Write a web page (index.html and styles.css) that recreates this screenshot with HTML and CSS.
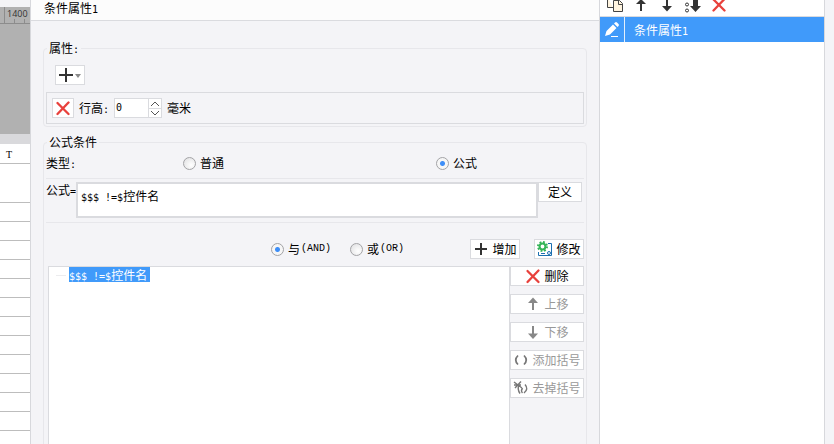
FILE: index.html
```html
<!DOCTYPE html>
<html lang="zh-CN">
<head>
<meta charset="utf-8">
<title>条件属性</title>
<link rel="stylesheet" href="styles.css">
</head>
<body>
<div class="app">
  <div class="sheet">
    <div class="ruler"><span>1400</span><svg width="30" height="17" viewBox="0 0 30 17"><path d="M4.500 0v17M14.500 12v4M24.500 12v4M0 16.500h30" stroke="#8c8c8c" fill="none"/></svg></div>
    <div class="canvas"></div>
    <div class="col-head">T</div>
    <div class="cell tall"></div>
    <div class="cell"></div><div class="cell"></div><div class="cell"></div><div class="cell"></div>
    <div class="cell"></div><div class="cell"></div><div class="cell"></div><div class="cell"></div>
    <div class="cell"></div><div class="cell"></div><div class="cell"></div><div class="cell"></div>
    <div class="cell"></div>
  </div>

  <main class="editor">
    <h1 class="title">条件属性<span class="en">1</span></h1>

    <fieldset class="group">
      <legend>属性<span class="en">:</span></legend>
      <button class="btn add-prop" aria-label="添加属性">
        <svg width="24" height="16" viewBox="0 0 24 16"><path d="M8 1v14M1 8h14" stroke="#333" stroke-width="2" fill="none"/><path d="M17 7h6l-3 4z" fill="#8a8a8a"/></svg>
      </button>
      <div class="prop-row">
        <button class="btn remove" aria-label="删除行高">
          <svg width="16" height="16" viewBox="0 0 16 16"><path d="M2.500 3l11 11M13.500 2.500L2.500 14" stroke="#e8413c" stroke-width="2.300" stroke-linecap="round"/></svg>
        </button>
        <label for="height">行高<span class="en">:</span></label>
        <div class="spinner">
          <input id="height" type="text" value="0">
          <div class="steps">
            <button aria-label="增大"><svg width="10" height="6" viewBox="0 0 10 6"><path d="M1 5l4-4 4 4" stroke="#555" fill="none"/></svg></button>
            <button aria-label="减小"><svg width="10" height="6" viewBox="0 0 10 6"><path d="M1 1l4 4 4-4" stroke="#555" fill="none"/></svg></button>
          </div>
        </div>
        <span>毫米</span>
      </div>
    </fieldset>

    <fieldset class="group conditions">
      <legend>公式条件</legend>
      <div class="type-row">
        <span>类型<span class="en">:</span></span>
        <label><input type="radio" name="type">普通</label>
        <label><input type="radio" name="type" checked>公式</label>
      </div>
      <div class="formula-row">
        <label for="formula">公式<span class="en">=</span></label>
        <div id="formula" class="formula" role="textbox" contenteditable="true"><span class="en">$$$ !=$</span>控件名</div>
        <button class="btn define">定义</button>
      </div>
      <div class="join-row">
        <label><input type="radio" name="join" checked>与<span class="serif">(AND)</span></label>
        <label><input type="radio" name="join">或<span class="serif">(OR)</span></label>
        <button class="btn small push">
          <svg width="16" height="16" viewBox="0 0 16 16"><path d="M8 2v12M2 8h12" stroke="#333" stroke-width="2"/></svg>增加</button>
        <button class="btn small">
          <svg width="16" height="16" viewBox="0 0 16 16"><path d="M11 2.500h3.500v12h-13V11" stroke="#1b6fb0" fill="none"/><path d="M4 12.500h4" stroke="#1b6fb0" fill="none"/><circle cx="12" cy="12" r="1.500" stroke="#1b6fb0" fill="none"/><circle cx="5.500" cy="5.500" r="4.500" fill="none" stroke="#35b558" stroke-width="2" stroke-dasharray="1.800 1.734"/><circle cx="5.500" cy="5.500" r="2.900" fill="none" stroke="#35b558" stroke-width="2"/></svg>修改</button>
      </div>
      <div class="tree-row">
        <div class="tree"><div class="node"><span class="en">$$$ !=$</span>控件名</div></div>
        <div class="actions">
          <button class="btn">
            <svg width="16" height="16" viewBox="0 0 16 16"><path d="M2.500 3l11 11M13.500 2.500L2.500 14" stroke="#e8413c" stroke-width="2.300" stroke-linecap="round"/></svg>删除</button>
          <button class="btn" disabled>
            <svg width="16" height="16" viewBox="0 0 16 16"><path d="M8 14V4" stroke="#888" stroke-width="2"/><path d="M3 7l5-5.500L13 7z" fill="#888"/></svg>上移</button>
          <button class="btn" disabled>
            <svg width="16" height="16" viewBox="0 0 16 16"><path d="M8 2v9" stroke="#888" stroke-width="2"/><path d="M3 9.500h10L8 15z" fill="#888"/></svg>下移</button>
          <button class="btn" disabled>
            <svg width="16" height="16" viewBox="0 0 16 16"><path d="M5 3.500Q.5 8 5 12.500M11 3.500Q15.500 8 11 12.500" stroke="#777" stroke-width="1.700" fill="none"/></svg>添加括号</button>
          <button class="btn" disabled>
            <svg width="16" height="16" viewBox="0 0 16 16"><path d="M1 2l8 6M8 1.500L2 8M1 5h7M6 5Q4 9 7 13.500M12 4.500Q16 9 11 13M9.500 8q-2 3 0 5" stroke="#777" stroke-width="1.400" fill="none"/></svg>去掉括号</button>
        </div>
      </div>
    </fieldset>
  </main>

  <aside class="list">
    <div class="tools">
      <button aria-label="复制"><svg width="18" height="18" viewBox="0 0 18 18"><path d="M1.500 2v10.500H7M1.500 2H9" stroke="#444" fill="#fff4df"/><path d="M7.500 5.500h6l3 3v8h-9z" fill="#fff4df" stroke="#444"/><path d="M12.500 6v3.500H16" fill="none" stroke="#444"/></svg></button>
      <button aria-label="上移"><svg width="18" height="18" viewBox="0 0 18 18"><path d="M9 16V4" stroke="#333" stroke-width="2"/><path d="M4 9l5-5 5 5z" fill="#333"/></svg></button>
      <button aria-label="下移"><svg width="18" height="18" viewBox="0 0 18 18"><path d="M9 3v10" stroke="#333" stroke-width="2"/><path d="M4 11h10l-5 5.500z" fill="#333"/></svg></button>
      <button aria-label="排序"><svg width="18" height="18" viewBox="0 0 18 18"><circle cx="3" cy="9.500" r="1.500" fill="none" stroke="#333"/><circle cx="3" cy="15.500" r="1.500" fill="none" stroke="#333"/><path d="M9 3h5v8h3l-5.500 6L6 11h3z" fill="#333"/></svg></button>
      <button aria-label="删除"><svg width="18" height="18" viewBox="0 0 18 18"><path d="M3.500 4.500l11 11M14.500 4L3.500 15.500" stroke="#e8413c" stroke-width="2.300" stroke-linecap="round"/></svg></button>
    </div>
    <div class="item">
      <span class="pen"><svg width="16" height="16" viewBox="0 0 16 16"><path d="M1 14l1.500-5L9 2.500 12.500 6 6 12.500z M10 1.500l1-1q1-.8 2 0l1.500 1.500q.8 1 0 2l-1 1z" fill="#fff"/><path d="M7 14.500h7" stroke="#fff"/></svg></span>
      <span class="name">条件属性<span class="en">1</span></span>
    </div>
  </aside>
</div>
</body>
</html>
```
FILE: styles.css
```css
* { box-sizing: border-box; }

body {
  margin: 0;
  background: #f4f4f7;
  color: #000;
  font: 12px/16px "Noto Sans CJK SC", sans-serif;
}

button, input {
  font: inherit;
  color: inherit;
  margin: 0;
}

svg { display: block; flex: none; }

.app {
  display: grid;
  grid-template-columns: 31px 1fr 235px;
  height: 100vh;
  overflow: hidden;
}

.en { font: 10px/14px "DejaVu Sans Mono", monospace; white-space: pre; }
.serif { font: 10px/20px "Liberation Mono", monospace; }

/* Spreadsheet behind the dialog */
.sheet {
  border-right: 1px solid #d7d8dc;
  background: #fff;
  overflow: hidden;
}
.ruler {
  display: grid;
  border-top: 7px solid #f4f4f7;
  background: #b1b1b1;
}
.ruler > * { grid-area: 1 / 1; }
.ruler span {
  padding-left: 7px;
  font: 9px/14px "Open Sans", sans-serif;
  color: #333;
}
.canvas {
  height: 120px;
  background: #b1b1b1;
  border-bottom: 10px solid #d9d9dc;
}
.col-head {
  height: 20px;
  padding-left: 6px;
  border-bottom: 1px solid #bdbdbd;
  font: 10px/22px "Liberation Serif", serif;
}
.cell { height: 19px; border-bottom: 1px solid #bdbdbd; }
.cell.tall { height: 39px; }

/* Editor */
.editor { min-width: 0; }
.title {
  height: 21px;
  margin: 0 0 19px;
  padding-left: 13px;
  border-bottom: 1px solid #dadbdf;
  background: #fcfcfc;
  font-size: 12px;
  font-weight: normal;
  line-height: 16px;
}
.group {
  min-width: 0;
  margin: 0 12px 7px;
  padding: 0 2px 2px;
  border: 1px solid #e7e7eb;
  border-radius: 4px;
}
.group legend { margin-left: 1px; padding: 0 2px; }

.btn {
  display: flex;
  align-items: center;
  justify-content: center;
  gap: 3px;
  height: 20px;
  padding: 0;
  border: 1px solid #dadbdf;
  background: #fff;
  white-space: nowrap;
}
.btn:disabled { color: #999; }

.add-prop { width: 30px; margin: 8px 0 7px 9px; }
.prop-row {
  display: flex;
  align-items: center;
  gap: 5px;
  height: 32px;
  padding-left: 5px;
  border: 1px solid #dadbdf;
}
.remove { width: 22px; }

.spinner {
  display: flex;
  width: 48px;
  height: 20px;
  border: 1px solid #dadbdf;
  background: #fff;
}
.spinner input {
  flex: 1;
  min-width: 0;
  padding: 0 1px;
  border: 0;
  outline: 0;
  background: none;
  font: 10px/16px "DejaVu Sans Mono", monospace;
}
.steps {
  display: grid;
  grid-template-rows: 1fr 1fr;
  width: 13px;
  border-left: 1px solid #dadbdf;
}
.steps button {
  display: grid;
  place-items: center;
  padding: 0;
  border: 0;
  background: #fff;
}
.steps button + button { border-top: 1px solid #dadbdf; }

input[type="radio"] {
  appearance: none;
  flex: none;
  width: 13px;
  height: 13px;
  border: 1px solid #a3a3a6;
  border-radius: 50%;
  background: radial-gradient(circle at 65% 65%, #fff, #dedee0);
}
input[type="radio"]:checked {
  background: radial-gradient(circle, #3e8ef7 0 2px, #f6f6f6 3px);
}

.type-row {
  display: grid;
  grid-template-columns: 137px 1fr 148px;
  align-items: center;
  height: 29px;
  padding-bottom: 2px;
  border-bottom: 1px solid #e7e7eb;
}
.type-row label, .join-row label {
  display: flex;
  align-items: center;
  gap: 4px;
}
.formula-row {
  display: flex;
  height: 44px;
  padding: 3px 2px 4px 0;
  border-bottom: 1px solid #e7e7eb;
}
.formula-row label { width: 30px; white-space: nowrap; }
.formula {
  flex: 1;
  padding: 4px 3px;
  border: 2px solid #dadbdf;
  background: #fff;
}
.define { width: 44px; }

.join-row {
  display: flex;
  align-items: center;
  height: 43px;
  padding: 10px 0 1px 225px;
}
.join-row label { margin-right: 19px; }
.join-row label + label { margin-right: 0; }
.join-row label .serif { margin-left: -3px; }
.small { width: 50px; margin-left: 14px; }
.push { margin-left: auto; }

.tree-row { display: flex; padding-left: 2px; }
.tree {
  flex: 1;
  display: flex;
  align-items: flex-start;
  height: 190px;
  border: 1px solid #dadbdf;
  background: #fff;
}
.tree::before {
  content: "";
  width: 10px;
  margin: 8px 3px 0 7px;
  border-top: 1px solid #ececee;
}
.node {
  height: 15px;
  padding-right: 3px;
  background: #409afa;
  color: #fff;
  line-height: 15px;
}
.actions {
  display: flex;
  flex-direction: column;
  gap: 8px;
  width: 74px;
}

/* Condition list */
.list {
  margin-right: 9px;
  border: solid #d7d8dc;
  border-width: 0 1px;
  background: #fff;
}
.tools {
  display: flex;
  gap: 8px;
  height: 17px;
  padding-left: 6px;
  border-bottom: 1px solid #dadbdf;
}
.tools button {
  display: flex;
  align-items: flex-end;
  height: 13px;
  padding: 0;
  border: 0;
  background: none;
}
.item {
  display: flex;
  height: 25px;
  background: #409afa;
  color: #fff;
  line-height: 26px;
}
.pen {
  display: grid;
  place-items: center;
  width: 25px;
  border-right: 1px solid #e4effb;
}
.name { padding-left: 9px; }
```
